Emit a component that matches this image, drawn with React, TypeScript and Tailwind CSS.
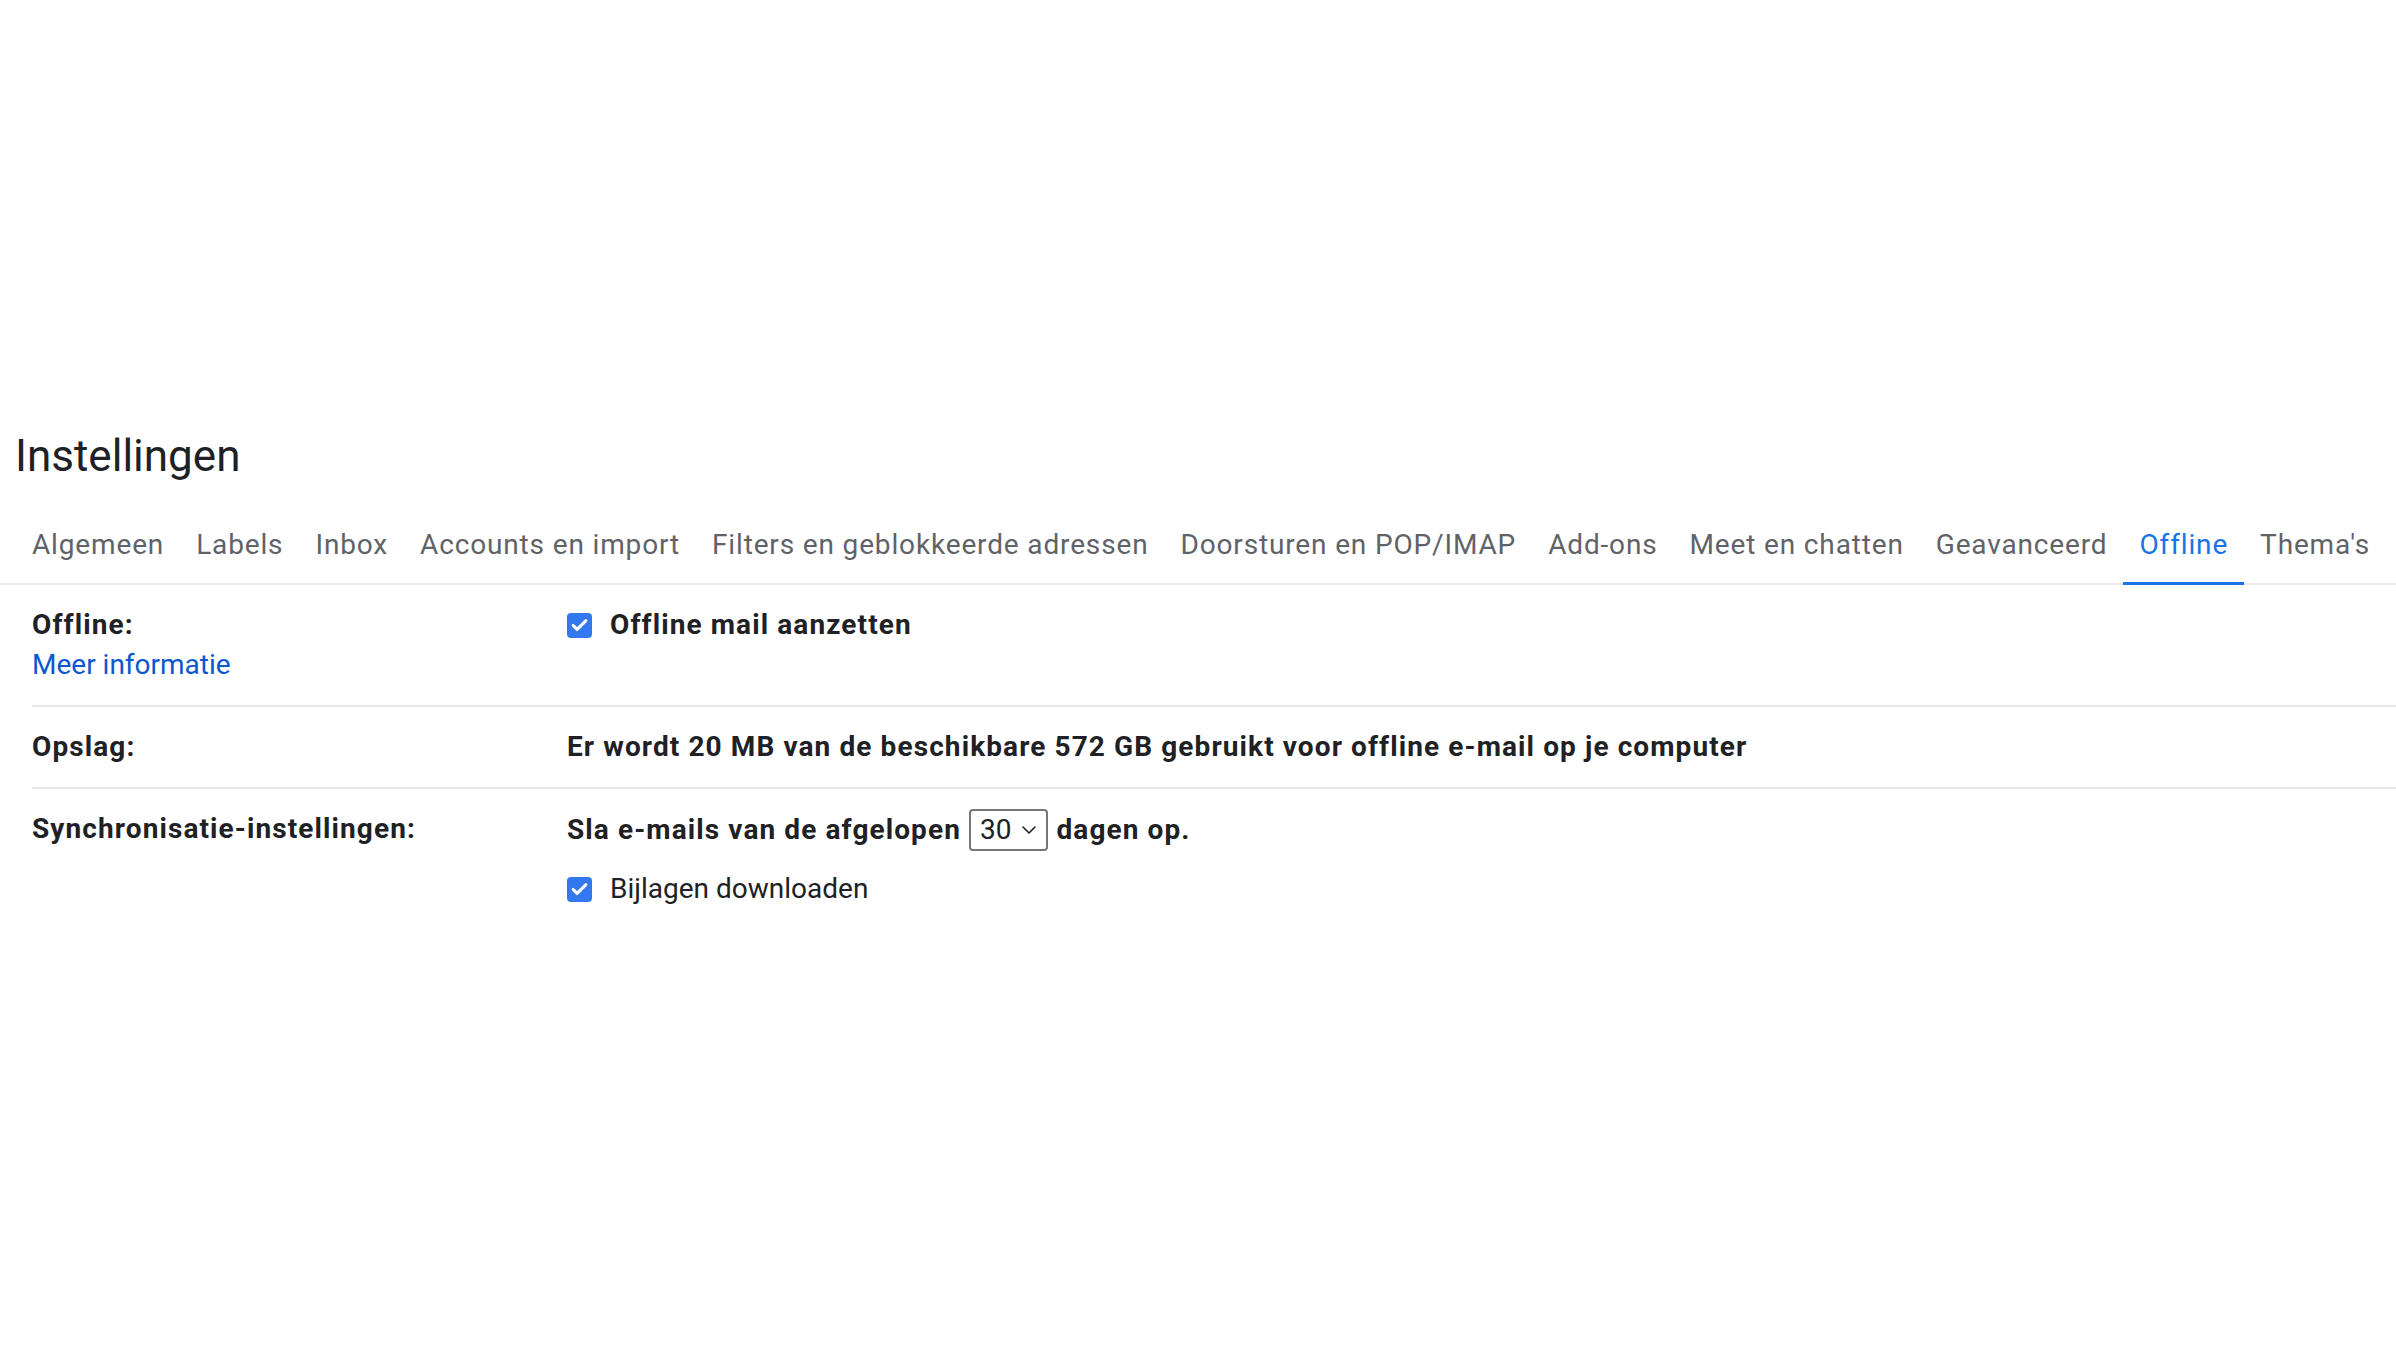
import { Check, ChevronDown } from "lucide-react";

const tabs = [
	"Algemeen",
	"Labels",
	"Inbox",
	"Accounts en import",
	"Filters en geblokkeerde adressen",
	"Doorsturen en POP/IMAP",
	"Add-ons",
	"Meet en chatten",
	"Geavanceerd",
	"Offline",
	"Thema's",
];

function Checkbox() {
	return (
		<span className="flex items-center justify-center w-[25px] h-[25px] shrink-0 rounded-[4px] bg-[#3478f0] text-white">
			<Check className="w-[19px] h-[19px]" strokeWidth={4} />
		</span>
	);
}

export default function App() {
	return (
		<main
			className="min-h-screen bg-white text-[#202124]"
			style={{ fontFamily: "Roboto, 'Noto Sans', sans-serif" }}>
			<div className="h-[428px]"></div>
			<h1 className="pl-[15px] text-[44px] leading-[56px] font-normal">Instellingen</h1>

			<nav className="flex pl-4 mt-[32px] border-b-2 border-[#e8eaed]">
				{tabs.map((tab) => {
					const active = tab === "Offline";
					return (
						<div
							key={tab}
							className={`px-4 pt-[9px] pb-[17px] -mb-[2px] text-[28px] leading-[40px] tracking-[0.85px] whitespace-nowrap border-b-[3px] ${
								active
									? "text-[#1a73e8] border-[#1a73e8]"
									: "text-[#5f6368] border-transparent"
							}`}>
							{tab}
						</div>
					);
				})}
			</nav>

			<div className="pl-8">
				<div className="flex py-[20px] border-b-2 border-[#e8e8e8] text-[28px] leading-[40px]">
					<div className="w-[535px] shrink-0">
						<div className="font-bold tracking-[1.1px]">Offline:</div>
						<div className="text-[#0b57d0]">Meer informatie</div>
					</div>
					<div className="flex items-center gap-[18px] h-[40px] font-bold tracking-[1.1px]">
						<Checkbox />
						<span>Offline mail aanzetten</span>
					</div>
				</div>

				<div className="flex py-[20px] border-b-2 border-[#e8e8e8] text-[28px] leading-[40px]">
					<div className="w-[535px] shrink-0 font-bold tracking-[1.1px]">Opslag:</div>
					<div className="font-bold tracking-[1.1px]">
						Er wordt 20 MB van de beschikbare 572 GB gebruikt voor offline e-mail op je computer
					</div>
				</div>

				<div className="flex py-[20px] text-[28px] leading-[40px]">
					<div className="w-[535px] shrink-0 font-bold tracking-[1.1px]">
						Synchronisatie-instellingen:
					</div>
					<div className="flex flex-col gap-[18px]">
						<div className="flex items-center gap-[8px] font-bold tracking-[1.1px]">
							<span>Sla e-mails van de afgelopen</span>
							<div className="flex items-center gap-[6px] h-[42px] pl-[9px] pr-[5px] border-2 border-[#767676] rounded-[4px] font-normal tracking-normal">
								<span>30</span>
								<ChevronDown className="w-[24px] h-[24px]" strokeWidth={1.6} />
							</div>
							<span>dagen op.</span>
						</div>
						<div className="flex items-center gap-[18px]">
							<Checkbox />
							<span>Bijlagen downloaden</span>
						</div>
					</div>
				</div>
			</div>
		</main>
	);
}
